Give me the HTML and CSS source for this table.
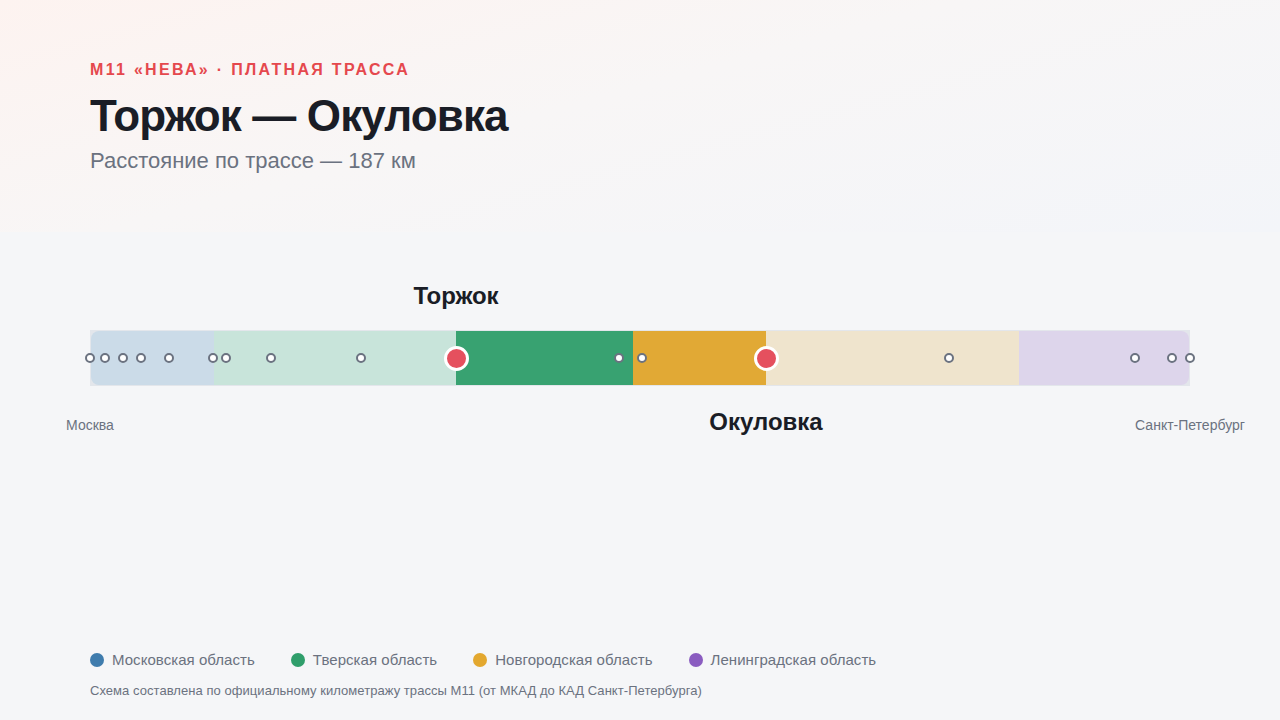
FILE: index.html
```html
<!DOCTYPE html>
<html lang="ru">
<head>
<meta charset="utf-8">
<title>Торжок — Окуловка</title>
<link rel="stylesheet" href="styles.css">
</head>
<body>
<div class="page">
  <header class="hero">
    <div class="eyebrow">М11 «НЕВА» · ПЛАТНАЯ ТРАССА</div>
    <h1 class="title">Торжок — Окуловка</h1>
    <div class="sub">Расстояние по трассе — 187 км</div>
  </header>

  <section class="chart">
    <div class="track">
      <div class="segments">
        <div class="seg seg-msk-pale" style="width:123px"></div>
        <div class="seg seg-tver-pale" style="width:242px"></div>
        <div class="seg seg-tver" style="width:177px"></div>
        <div class="seg seg-nov" style="width:133px"></div>
        <div class="seg seg-nov-pale" style="width:253px"></div>
        <div class="seg seg-len-pale" style="width:170px"></div>
      </div>

      <span class="dot" style="left:0px"></span>
      <span class="dot" style="left:15px"></span>
      <span class="dot" style="left:33px"></span>
      <span class="dot" style="left:51px"></span>
      <span class="dot" style="left:79px"></span>
      <span class="dot" style="left:123px"></span>
      <span class="dot" style="left:136px"></span>
      <span class="dot" style="left:181px"></span>
      <span class="dot" style="left:271px"></span>
      <span class="dot" style="left:529px"></span>
      <span class="dot" style="left:552px"></span>
      <span class="dot" style="left:859px"></span>
      <span class="dot" style="left:1045px"></span>
      <span class="dot" style="left:1082px"></span>
      <span class="dot" style="left:1100px"></span>

      <span class="pin" style="left:366px"></span>
      <span class="pin" style="left:676px"></span>

      <span class="city city-above" style="left:366px">Торжок</span>
      <span class="city city-below" style="left:676px">Окуловка</span>
      <span class="end" style="left:0px">Москва</span>
      <span class="end" style="left:1100px">Санкт-Петербург</span>
    </div>
  </section>

  <footer class="foot">
    <ul class="legend">
      <li class="legend-item"><span class="swatch sw-msk"></span>Московская область</li>
      <li class="legend-item"><span class="swatch sw-tver"></span>Тверская область</li>
      <li class="legend-item"><span class="swatch sw-nov"></span>Новгородская область</li>
      <li class="legend-item"><span class="swatch sw-len"></span>Ленинградская область</li>
    </ul>
    <p class="note">Схема составлена по официальному километражу трассы М11 (от МКАД до КАД Санкт-Петербурга)</p>
  </footer>
</div>
</body>
</html>
```

FILE: styles.css
```css
* { box-sizing: border-box; }

html, body {
  margin: 0;
  padding: 0;
}

body {
  width: 1280px;
  height: 720px;
  overflow: hidden;
  background: #f5f6f8;
  font-family: "Liberation Sans", Arial, sans-serif;
  color: #1a1d26;
}

.page {
  display: flex;
  flex-direction: column;
  height: 720px;
  padding: 0 90px;
  background:
    linear-gradient(165deg, #fdf3f0 0%, #f8f6f6 45%, #f3f5f9 100%) top left / 100% 232px no-repeat,
    #f5f6f8;
}

.hero {
  padding-top: 60px;
}

.eyebrow {
  font-size: 16px;
  line-height: 20px;
  font-weight: 700;
  letter-spacing: 2.3px;
  color: #e5484d;
}

.title {
  margin: 11px 0 0;
  font-size: 44px;
  line-height: 50px;
  font-weight: 700;
  letter-spacing: -0.02em;
  color: #1a1d26;
}

.sub {
  margin-top: 8px;
  font-size: 22px;
  line-height: 24px;
  color: #6b7280;
}

.chart {
  margin-top: 157px;
}

.track {
  position: relative;
  width: 1100px;
  height: 56px;
  padding: 1px;
  background: #e3e6eb;
}

.segments {
  display: flex;
  height: 54px;
  border-radius: 8px;
  overflow: hidden;
}

.seg { height: 100%; flex: none; }
.seg-msk-pale { background: #cbdbe8; }
.seg-tver-pale { background: #c8e4da; }
.seg-tver { background: #38a271; }
.seg-nov { background: #e1a935; }
.seg-nov-pale { background: #efe4cd; }
.seg-len-pale { background: #ddd5eb; }

.dot {
  position: absolute;
  top: 28px;
  width: 10px;
  height: 10px;
  margin: -5px 0 0 -5px;
  border-radius: 50%;
  background: #ffffff;
  border: 2px solid #6b7280;
}

.pin {
  position: absolute;
  top: 28px;
  width: 25px;
  height: 25px;
  margin: -12.5px 0 0 -12.5px;
  border-radius: 50%;
  background: #e5505e;
  border: 3px solid #ffffff;
}

.city {
  position: absolute;
  transform: translateX(-50%);
  font-size: 24px;
  line-height: 28px;
  font-weight: 700;
  color: #1a1d26;
  white-space: nowrap;
}

.city-above { bottom: calc(100% + 20px); }
.city-below { top: 78px; }

.end {
  position: absolute;
  top: 86px;
  transform: translateX(-50%);
  font-size: 14px;
  line-height: 18px;
  color: #6b7280;
  white-space: nowrap;
}

.foot {
  margin-top: auto;
  padding-bottom: 21px;
}

.legend {
  display: flex;
  gap: 36px;
  margin: 0;
  padding: 0;
  list-style: none;
}

.legend-item {
  display: flex;
  align-items: center;
  gap: 8px;
  font-size: 15px;
  line-height: 20px;
  letter-spacing: 0.05px;
  color: #6b7280;
}

.swatch {
  width: 14px;
  height: 14px;
  border-radius: 50%;
  flex: none;
}

.sw-msk { background: #3f7cad; }
.sw-tver { background: #2f9e6b; }
.sw-nov { background: #e3a82f; }
.sw-len { background: #8a5cc0; }

.note {
  margin: 13px 0 0;
  font-size: 13px;
  line-height: 16px;
  letter-spacing: 0.05px;
  color: #6b7280;
}
```
